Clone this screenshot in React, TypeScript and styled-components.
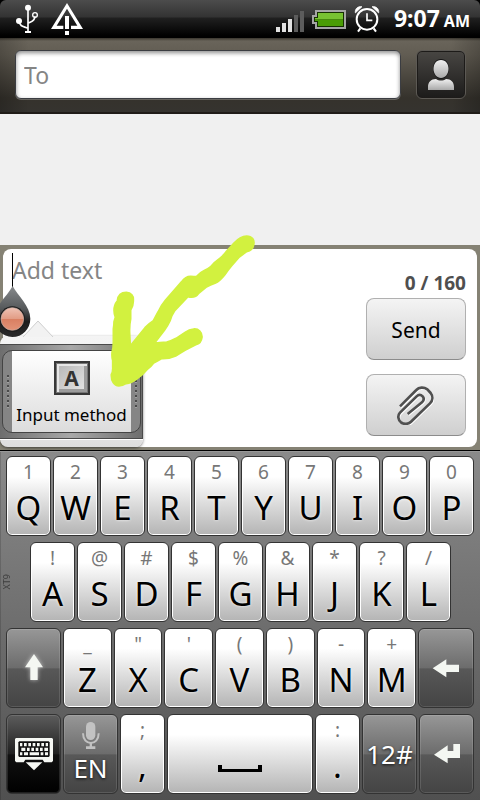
import React from "react";
import styled, { createGlobalStyle, css } from "styled-components";

const GlobalStyle = createGlobalStyle`
  *, *::before, *::after { box-sizing: border-box; }
  body { margin: 0; background: #000; font-family: "Noto Sans", "Open Sans", sans-serif; }
  button, input, textarea { font: inherit; margin: 0; }
  svg { display: block; flex: none; }
`;

const Screen = styled.div`
  display: flex;
  flex-direction: column;
  min-height: 100vh;
  overflow: hidden;
`;

/* ---------- status bar ---------- */

const StatusBar = styled.header`
  display: flex;
  align-items: center;
  justify-content: space-between;
  height: 38px;
  padding: 0 10px 0 15px;
  border-radius: 6px 6px 0 0;
  background: linear-gradient(#4c4c4c 0, #333 17px, #202020 18px, #000 36px);
`;

const StatusGroup = styled.div<{ $gap: number }>`
  display: flex;
  align-items: center;
  gap: ${(p) => p.$gap}px;
`;

const Clock = styled.time`
  margin-left: 6px;
  color: #fff;
  font-size: 23px;
  font-weight: 700;
  line-height: 38px;
  white-space: nowrap;

  small {
    margin-left: 4px;
    font-size: 16px;
  }
`;

/* ---------- recipient bar ---------- */

const RecipientBar = styled.div`
  display: flex;
  gap: 15px;
  padding: 12px 14px 13px 15px;
  border-bottom: 2px solid #201c18;
  background:
    linear-gradient(90deg, rgba(0, 0, 0, 0.2), transparent 6%, transparent 94%, rgba(0, 0, 0, 0.2)),
    linear-gradient(#3a362e 0, #69645a 3px, #625d53 16px, #35322c 60px, #35332f);
`;

const RecipientInput = styled.input`
  flex: 1;
  min-width: 0;
  height: 49px;
  padding: 0 8px;
  border: 1px solid #3b3d42;
  border-radius: 6px;
  outline: none;
  background: #fff;
  box-shadow: inset 0 2px 4px rgba(0, 0, 0, 0.45), 0 1px 0 #66645f;
  color: #000;
  font-size: 23px;

  &::placeholder {
    color: #858585;
    opacity: 1;
  }
`;

const ContactButton = styled.button`
  display: grid;
  place-items: center;
  width: 50px;
  height: 49px;
  padding: 0;
  border: 1px solid #5c5954;
  border-radius: 6px;
  background: linear-gradient(#484643, #1c1b1a);
  box-shadow: inset 0 0 0 1px #1d1b19;
`;

/* ---------- conversation and composer ---------- */

const Conversation = styled.main`
  flex: 1;
  min-height: 40px;
  background: #f0f0f0;
`;

const Composer = styled.section`
  position: relative;
  padding: 4px 3px 3px;
  background: #858274;
`;

const ComposerPanel = styled.div`
  display: flex;
  border-radius: 8px;
  background: #fff;
`;

const MessageInput = styled.textarea`
  flex: 1;
  min-width: 0;
  padding: 5px 9px;
  border: 0;
  outline: none;
  resize: none;
  background: transparent;
  color: #000;
  font-size: 23px;
  line-height: 32px;

  &::placeholder {
    color: #858585;
    opacity: 1;
  }
`;

const ComposerSide = styled.div`
  display: flex;
  flex-direction: column;
  width: 100px;
  margin: 21px 11px 11px 0;
`;

const Counter = styled.output`
  margin-bottom: 2px;
  color: #4f4f4f;
  font-size: 19px;
  font-weight: 700;
  line-height: 26px;
  text-align: right;
  white-space: nowrap;
`;

const ActionButton = styled.button`
  display: grid;
  place-items: center;
  height: 62px;
  padding: 2px 0 0;
  border: 1px solid #b0b0b0;
  border-bottom-color: #8c8c8c;
  border-radius: 8px;
  background: linear-gradient(#f4f4f4, #cfcfcf);
  color: #000;
  font-size: 21px;

  & + & {
    margin-top: 14px;
    padding: 0 2px 0 0;
  }
`;

/* ---------- text cursor and its popup ---------- */

const Caret = styled.span`
  position: absolute;
  top: 8px;
  left: 12px;
  width: 1px;
  height: 34px;
  background: #000;
`;

const CaretHandle = styled.svg`
  position: absolute;
  top: 40px;
  left: 0;
`;

const Popup = styled.div`
  position: absolute;
  top: 91px;
  left: 0;
  width: 143px;
  padding: 8px 0;
  border-radius: 8px;
  background: linear-gradient(#f4f4f4, #ececec 60%, #dedede);
  box-shadow: 0 1px 3px rgba(0, 0, 0, 0.5);
`;

const PopupPointer = styled.svg`
  position: absolute;
  top: -16px;
  left: 22px;
`;

const PopupFrame = styled.div`
  padding: 5px 1px 5px 2px;
  border-top: 1px solid #4a4a4a;
  border-right: 1px solid #4a4a4a;
  border-bottom: 1px solid #4a4a4a;
  background: linear-gradient(90deg, #6e6e6e, #a8a8a8 50%, #6e6e6e);
  box-shadow: 0 1px 0 #fff;
`;

const PopupButton = styled.button`
  display: flex;
  width: 100%;
  height: 83px;
  padding: 0;
  overflow: hidden;
  border: 1px solid #444;
  border-radius: 10px;
  background: #858585;
  color: #000;
`;

const Grip = styled.span`
  display: grid;
  place-items: center;
  width: 9px;
  height: 100%;

  &::before {
    content: "";
    width: 2px;
    height: 33px;
    background: repeating-linear-gradient(#4a4a4a 0 2px, #a0a0a0 2px 3px, transparent 3px 5px);
  }
`;

const PopupBody = styled.span`
  display: flex;
  flex: 1;
  flex-direction: column;
  align-items: center;
  height: 100%;
  padding-top: 10px;
  background: linear-gradient(#fff, #dcdcdc);
  font-size: 17px;
  line-height: 40px;
  white-space: nowrap;
`;

const LetterTile = styled.span`
  display: grid;
  place-items: center;
  width: 36px;
  height: 35px;
  border: 2px solid #383838;
  background: linear-gradient(135deg, #b4b4b4, #e8e8e8);
  box-shadow: inset 0 0 0 1px #777, inset 2px 2px 0 1px #e6e6e6, inset -3px -3px 0 1px #9c9c9c;
  color: #333;
  font-size: 21px;
  font-weight: 700;
  line-height: 30px;
`;

const Scribble = styled.svg`
  position: absolute;
  top: -20px;
  left: 100px;
  pointer-events: none;
`;

/* ---------- keyboard ---------- */

const Keyboard = styled.section`
  display: flex;
  flex-direction: column;
  gap: 6px;
  padding: 5px 6px 6px;
  border-top: 1px solid #000;
  background: linear-gradient(#8a8a8a, #6b6b6b 55%, #505050);
  box-shadow: inset 0 1px 0 #989898, inset 1px 0 0 rgba(0, 0, 0, 0.15);
`;

const KeyRow = styled.div`
  display: flex;
  gap: 2px;
  height: 80px;
`;

const RowEnd = styled.div<{ $width: number }>`
  display: flex;
  align-items: center;
  width: ${(p) => p.$width}px;
`;

const EngineMark = styled.span`
  margin-left: -6px;
  color: #3c3c3c;
  font-size: 9px;
  line-height: 13px;
  writing-mode: vertical-rl;
  transform: rotate(180deg);
`;

type Tone = "light" | "dark" | "black";

const tones = {
  light: css`
    background: linear-gradient(#fff 25%, #b4b4b4);
    box-shadow: inset 0 0 0 1px #fff;
    color: #000;
  `,
  dark: css`
    background: linear-gradient(#979797, #6c6c6c 50%, #585858 51%, #444);
    box-shadow: inset 0 0 0 1px rgba(255, 255, 255, 0.12);
    color: #fff;
  `,
  black: css`
    background: linear-gradient(#5c5c5c, #202020 50%, #111 51%, #000);
    box-shadow: inset 0 0 0 1px rgba(255, 255, 255, 0.12);
    color: #fff;
  `,
};

const Key = styled.button<{ $tone?: Tone; $width?: number; $centered?: boolean }>`
  display: flex;
  flex: ${(p) => (p.$width ? `0 0 ${p.$width}px` : "1 1 0")};
  flex-direction: column;
  align-items: center;
  justify-content: ${(p) => (p.$centered ? "center" : "flex-start")};
  min-width: 0;
  height: 80px;
  padding: ${(p) => (p.$centered ? "0" : "2px 0 0")};
  border: 1px solid #333;
  border-radius: 6px;
  ${(p) => tones[p.$tone ?? "light"]}
`;

const Hint = styled.span`
  color: #777;
  font-size: 19px;
  line-height: 26px;
`;

const Letter = styled.span`
  font-size: 33px;
  line-height: 45px;
  text-shadow: 0 0 3px rgba(255, 255, 255, 0.9);
`;

const ModeLabel = styled.span`
  font-size: 26px;
  line-height: 36px;
  text-shadow: 0 1px 3px rgba(0, 0, 0, 0.8);
`;

const SpaceIconSlot = styled.span`
  margin-top: 48px;
`;

/* ---------- drawings ---------- */

const UsbIcon = () => (
  <svg width="24" height="30" viewBox="45 9 72 90" fill="none" stroke="#fff" strokeWidth="5" aria-label="USB connected">
    <path d="M84 18V92M58 62C60 78 72 76 84 82M105 46C105 62 92 62 84 67" />
    <circle cx="84" cy="20" r="9" fill="#fff" stroke="none" />
    <circle cx="57" cy="60" r="9" fill="#fff" stroke="none" />
    <circle cx="105" cy="42" r="7" strokeWidth="4" />
    <path d="M75 93H93" strokeWidth="6" />
  </svg>
);

const WarningIcon = () => (
  <svg width="32" height="32" viewBox="153 9 96 96" aria-label="Warning">
    <path d="M201 9L249 87H213V77H232L201 26L170 77H190V87H153Z" fill="#fff" />
    <path d="M195 48H207V87H195ZM195 93H207V105H195Z" fill="#fff" />
  </svg>
);

const SignalIcon = () => (
  <svg width="28" height="26" viewBox="0 -4 28 26" aria-label="Signal">
    <path d="M0 17H4V22H0ZM6 13H10V22H6ZM12 9H16V22H12Z" fill="#e2e2e2" />
    <path d="M18 5H22V22H18ZM24 1H28V22H24Z" fill="#5c5c5c" />
  </svg>
);

const BatteryIcon = () => (
  <svg width="34" height="19" viewBox="0 0 34 19" aria-label="Battery">
    <path d="M3 0H34V19H3V14H0V5H3Z" fill="#a5a5a5" />
    <path d="M5 2H32V17H5V12H2V7H5Z" fill="#163000" />
    <path d="M6 3H31V9.500H3V8H6Z" fill="#78c232" />
    <path d="M3 9.500H31V16H6V11H3Z" fill="#4a9c05" />
  </svg>
);

const AlarmIcon = () => (
  <svg width="26" height="28" viewBox="342 15 78 84" fill="none" stroke="#fff" aria-label="Alarm set">
    <circle cx="381" cy="58" r="31" strokeWidth="6" />
    <path d="M381 40V61H397" strokeWidth="5" />
    <path d="M361 85L354 95M401 85L408 95" strokeWidth="6" />
    <path d="M346 39C344 26 354 18 366 20Z M396 20C408 18 418 26 416 39Z" fill="#fff" strokeWidth="2" />
  </svg>
);

const ContactIcon = () => (
  <svg width="28" height="32" viewBox="0 0 28 32" aria-hidden="true">
    <defs>
      <linearGradient id="person" x1="0" y1="0" x2="0" y2="1">
        <stop offset="0" stopColor="#f0f0f0" />
        <stop offset="1" stopColor="#a9a9a9" />
      </linearGradient>
    </defs>
    <path d="M1 31V28C1 23 4 20 9 20C12 22 16 22 19 20C24 20 27 23 27 28V31Z" fill="url(#person)" />
    <path d="M14 0C19 0 22 4 22 10C22 15 18.500 20 14 20C9.500 20 6 15 6 10C6 4 9 0 14 0Z" fill="#161616" />
    <path d="M14 1C19 1 21.500 5 21.500 10C21.500 15 18 19 14 19C10 19 6.500 15 6.500 10C6.500 5 9 1 14 1Z" fill="url(#person)" />
  </svg>
);

const clipPath =
  "M180 496L229 447C237 438 252 438 262 445L272 456C279 465 279 478 270 487L213 542C205 550 192 551 183 544C174 536 172 524 180 515L230 466C236 460 243 461 248 466C253 472 251 479 246 484L203 519";

const PaperclipIcon = () => (
  <svg width="38" height="40" viewBox="168 432 114 120" fill="none" strokeLinejoin="round" aria-hidden="true">
    <path d={clipPath} stroke="#fff" strokeWidth="6" transform="translate(3 3)" />
    <path d={clipPath} stroke="#505050" strokeWidth="8" />
  </svg>
);

const HandleDrawing = () => (
  <CaretHandle width="32" height="54" viewBox="0 165 96 162" aria-hidden="true">
    <defs>
      <linearGradient id="drop" x1="0" y1="0" x2="0" y2="1">
        <stop offset="0" stopColor="#888b8d" />
        <stop offset="0.45" stopColor="#55585a" />
        <stop offset="0.7" stopColor="#1d1d1d" />
        <stop offset="1" stopColor="#2a2a2a" />
      </linearGradient>
      <linearGradient id="gem" x1="0" y1="0" x2="0" y2="1">
        <stop offset="0" stopColor="#efc2b4" />
        <stop offset="0.48" stopColor="#e29d86" />
        <stop offset="0.5" stopColor="#d97f62" />
        <stop offset="1" stopColor="#e39377" />
      </linearGradient>
    </defs>
    <path d="M38 168C52 196 91 228 91 266C91 297 67 321 37 321C7 321 -17 297 -17 266C-17 228 24 196 38 168Z" fill="url(#drop)" />
    <circle cx="37" cy="267" r="38" fill="#1b1b1b" />
    <circle cx="37" cy="267" r="34" fill="url(#gem)" stroke="#c9b0a8" strokeWidth="2" />
  </CaretHandle>
);

const PointerDrawing = () => (
  <PopupPointer width="32" height="18" viewBox="0 0 32 18" aria-hidden="true">
    <path d="M1 17L16 1L31 17" fill="#f2f2f2" stroke="#cfcfcf" />
  </PopupPointer>
);

const ScribbleDrawing = () => (
  <Scribble width="180" height="180" viewBox="0 0 540 540" aria-hidden="true">
    <path
      d="M440 33C456 33 465 45 461 60C459 74 450 78 440 80L418 96L395 122Q385 134 374 150Q360 168 345 175Q332 180 318 187L297 204C290 214 280 220 264 215L225 256Q214 272 210 288Q203 303 194 315L164 354Q178 352 200 351Q214 348 228 340L255 322Q268 313 280 312C296 310 307 322 306 337C304 350 300 356 290 358L255 376Q242 384 227 393Q208 402 184 401Q172 408 161 414Q154 424 141 434Q128 450 110 462Q95 474 78 476Q68 483 57 483C42 482 33 468 34 448Q39 440 38 426V407Q35 400 36 382Q40 370 40 350V312Q42 300 42 290L46 277C40 260 42 240 52 227C54 210 63 202 79 202C94 203 101 213 100 225C101 240 96 248 92 255V282Q88 300 89 324L91 362L113 335L135 308Q146 296 160 287L174 261Q184 240 196 226L245 170Q256 154 272 154Q282 155 290 154Q301 142 314 136Q324 132 331 126Q344 110 359 100Q372 90 380 78L402 54Q420 34 440 33Z"
      fill="#d2f13f"
      stroke="#d2f13f"
      strokeWidth="5"
      strokeLinejoin="round"
    />
  </Scribble>
);

const GlowArrow = ({ d, glow }: { d: string; glow?: boolean }) => (
  <svg width="48" height="48" viewBox="0 0 144 144" aria-hidden="true">
    {glow && (
      <>
        <defs>
          <filter id="halo" x="-50%" y="-50%" width="200%" height="200%">
            <feGaussianBlur stdDeviation="7" />
          </filter>
        </defs>
        <path d={d} fill="#fff" opacity="0.6" filter="url(#halo)" />
      </>
    )}
    <path d={d} fill="#f4f7f2" />
  </svg>
);

const HideKeyboardIcon = () => (
  <svg width="38" height="33" viewBox="0 0 114 99" aria-hidden="true">
    <path d="M3 0H111L114 3V69L110 73H88L83 65H31L26 73H4L0 69V3Z" fill="#f6f8f4" />
    <path d="M13 10H101L104 13V54L101 57H13L10 54V13Z" fill="#111" />
    <path
      d="M15 15H22V25H15ZM27 15H35V25H27ZM40 15H48V25H40ZM53 15H61V25H53ZM66 15H74V25H66ZM79 15H87V25H79ZM92 15H99V25H92ZM19 29H31V39H19ZM36 29H44V39H36ZM49 29H57V39H49ZM62 29H70V39H62ZM75 29H83V39H75ZM88 29H99V39H88ZM15 43H22V52H15ZM27 43H39V52H27ZM44 43H72V52H44ZM77 43H85V52H77ZM90 43H99V52H90Z"
      fill="#f6f8f4"
    />
    <path d="M32 73H82L57 97Z" fill="#f6f8f4" />
  </svg>
);

const MicIcon = () => (
  <svg width="20" height="28" viewBox="242 301 56 84" aria-hidden="true">
    <rect x="255" y="301" width="28" height="54" rx="14" fill="#c2c2c2" />
    <path d="M246 335C246 374 293 374 293 335" fill="none" stroke="#c2c2c2" strokeWidth="6" />
    <path d="M266 362H273V374H283V382H255V374H266Z" fill="#c2c2c2" />
  </svg>
);

const SpaceIcon = () => (
  <svg width="44" height="7" viewBox="0 0 44 7" aria-hidden="true">
    <path d="M0 0H4V4H40V0H44V7H0Z" fill="#000" />
  </svg>
);

/* ---------- data ---------- */

const topRow = ["1Q", "2W", "3E", "4R", "5T", "6Y", "7U", "8I", "9O", "0P"];
const homeRow = ["!A", "@S", "#D", "$F", "%G", "&H", "*J", "?K", "/L"];
const bottomRow = ["_Z", '"X', "'C", "(V", ")B", "-N", "+M"];

const CharKey = ({ pair, width }: { pair: string; width?: number }) => (
  <Key type="button" $width={width}>
    <Hint>{pair[0]}</Hint>
    <Letter>{pair[1]}</Letter>
  </Key>
);

export default function App() {
  return (
    <>
      <GlobalStyle />
      <Screen>
        <StatusBar>
          <StatusGroup $gap={12}>
            <UsbIcon />
            <WarningIcon />
          </StatusGroup>
          <StatusGroup $gap={8}>
            <SignalIcon />
            <BatteryIcon />
            <AlarmIcon />
            <Clock>
              9:07<small>AM</small>
            </Clock>
          </StatusGroup>
        </StatusBar>

        <RecipientBar>
          <RecipientInput type="text" placeholder="To" aria-label="To" />
          <ContactButton type="button" aria-label="Choose contact">
            <ContactIcon />
          </ContactButton>
        </RecipientBar>

        <Conversation />

        <Composer>
          <ComposerPanel>
            <MessageInput placeholder="Add text" aria-label="Message" />
            <ComposerSide>
              <Counter>0 / 160</Counter>
              <ActionButton type="button">Send</ActionButton>
              <ActionButton type="button" aria-label="Attach">
                <PaperclipIcon />
              </ActionButton>
            </ComposerSide>
          </ComposerPanel>
          <Caret />
          <Popup>
            <PointerDrawing />
            <PopupFrame>
              <PopupButton type="button">
                <Grip />
                <PopupBody>
                  <LetterTile>A</LetterTile>
                  <span>Input method</span>
                </PopupBody>
                <Grip />
              </PopupButton>
            </PopupFrame>
          </Popup>
          <HandleDrawing />
          <ScribbleDrawing />
        </Composer>

        <Keyboard aria-label="Keyboard">
          <KeyRow>
            {topRow.map((pair) => (
              <CharKey key={pair} pair={pair} />
            ))}
          </KeyRow>
          <KeyRow>
            <RowEnd $width={22}>
              <EngineMark>XT9</EngineMark>
            </RowEnd>
            {homeRow.map((pair) => (
              <CharKey key={pair} pair={pair} />
            ))}
            <RowEnd $width={21} />
          </KeyRow>
          <KeyRow>
            <Key type="button" $tone="dark" $width={55} $centered aria-label="Shift">
              <GlowArrow glow d="M72 30L99 70H83V108H61V70H45Z" />
            </Key>
            {bottomRow.map((pair) => (
              <CharKey key={pair} pair={pair} />
            ))}
            <Key type="button" $tone="dark" $width={56} $centered aria-label="Backspace">
              <GlowArrow d="M32 73L73 46V62H111V84H73V100Z" />
            </Key>
          </KeyRow>
          <KeyRow>
            <Key type="button" $tone="black" $width={55} $centered aria-label="Hide keyboard">
              <HideKeyboardIcon />
            </Key>
            <Key type="button" $tone="dark" $width={55} $centered>
              <MicIcon />
              <ModeLabel>EN</ModeLabel>
            </Key>
            <CharKey pair=";," width={45} />
            <Key type="button" aria-label="Space">
              <SpaceIconSlot>
                <SpaceIcon />
              </SpaceIconSlot>
            </Key>
            <CharKey pair=":." width={45} />
            <Key type="button" $tone="dark" $width={55} $centered>
              <ModeLabel>12#</ModeLabel>
            </Key>
            <Key type="button" $tone="dark" $width={55} $centered aria-label="Enter">
              <GlowArrow d="M33 74L74 46V63H91V42H111V84H74V100Z" />
            </Key>
          </KeyRow>
        </Keyboard>
      </Screen>
    </>
  );
}
